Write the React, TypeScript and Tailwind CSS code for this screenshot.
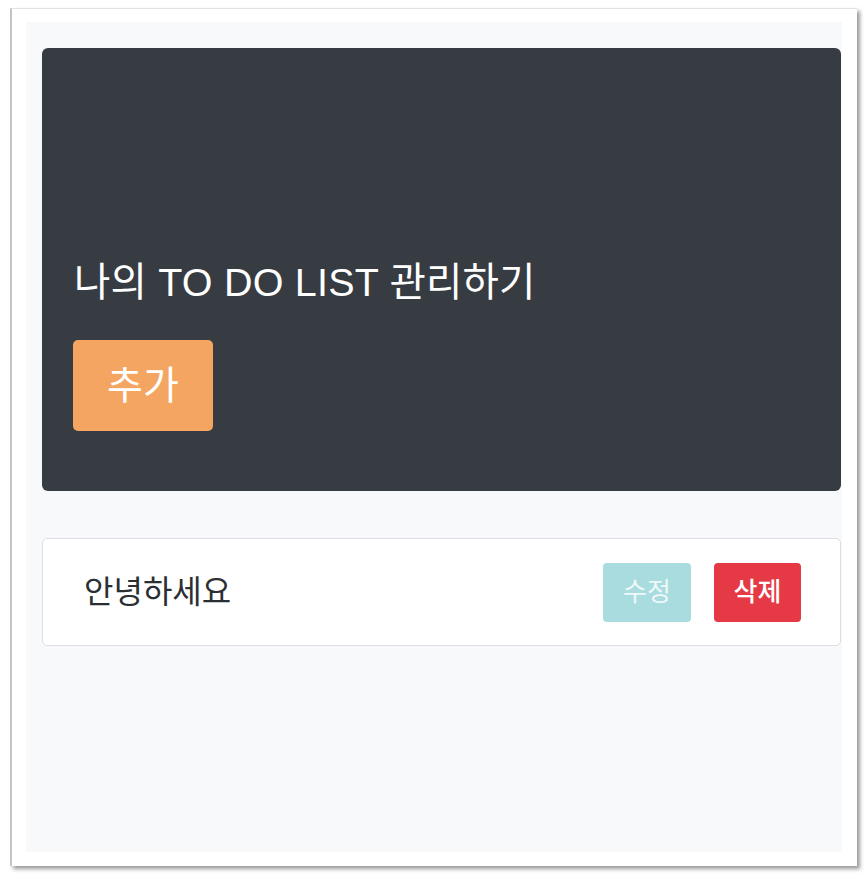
const font = { fontFamily: '"Liberation Sans", "Noto Sans CJK KR", sans-serif' };

const TodoItem: React.FC<{ text: string }> = ({ text }) => (
  <div className="ml-4 mt-[47px] w-[799px] h-[108px] bg-white border border-[#dcdfe3] rounded-[5px] flex items-center pl-[41px] pr-[39px]">
    <span className="text-[32px] text-[#2b2f33] flex-1 leading-none">{text}</span>
    <div className="flex gap-[23px]">
      <button className="w-[88px] h-[59px] rounded-[4px] bg-[#a9dcdf] text-[#eef8f9] text-[26px] leading-none">수정</button>
      <button className="w-[87px] h-[59px] rounded-[4px] bg-[#e63946] text-white text-[26px] font-medium leading-none">삭제</button>
    </div>
  </div>
);

export default function App() {
  return (
    <div className="w-[868px] h-[881px] bg-white pt-2 pl-[10px]" style={font}>
      <div className="w-[847px] h-[858px] bg-white border-l-2 border-t border-l-[#c4c4c4] border-t-[#e2e2e2] shadow-[3px_3px_4px_rgba(0,0,0,0.4)] pl-[14px] pt-[13px]">
        <div className="w-[816px] h-[830px] bg-[#f8f9fa] pt-[26px]">
          <div className="ml-4 w-[799px] h-[443px] bg-[#373b42] rounded-[6px] flex flex-col justify-end pl-[31px] pb-[60px]">
            <h1 className="text-[39.5px] text-white leading-none mb-[38px] ml-[1px] tracking-[0.2px]">나의 TO DO LIST 관리하기</h1>
            <button className="w-[140px] h-[91px] rounded-[5px] bg-[#f5a562] text-white text-[39px] leading-none">추가</button>
          </div>
          <TodoItem text="안녕하세요" />
        </div>
      </div>
    </div>
  );
}
